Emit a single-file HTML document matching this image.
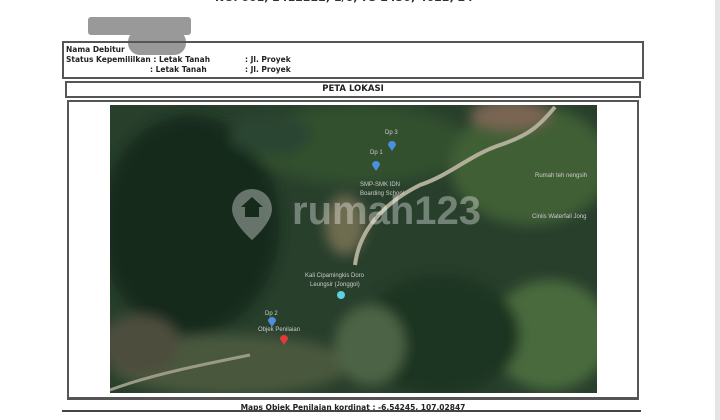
<!DOCTYPE html>
<html><head><style>
*{margin:0;padding:0;box-sizing:border-box}
body{width:720px;height:420px;background:#fff;position:relative;overflow:hidden;font-family:"DejaVu Sans","Liberation Sans",sans-serif;font-weight:bold;color:#222}
.b{position:absolute;border:2px solid #555}
.t{position:absolute;font-size:7.5px;white-space:nowrap}
</style></head><body>
<div style="position:absolute;right:0;top:0;width:5px;height:420px;background:#e6e6e6"></div>
<div class="t" style="left:215px;top:-9px;font-size:11px;color:#333">NO. 001, 2412222, 1/6, 73 2430, 4022, 24</div>
<div style="position:absolute;left:88px;top:17px;width:103px;height:18px;background:#999;border-radius:3px"></div>
<div style="position:absolute;left:128px;top:30px;width:58px;height:25px;background:#999;border-radius:12px"></div>
<div class="b" style="left:62px;top:41px;width:582px;height:38px"></div>
<div class="t" style="left:66px;top:45px">Nama Debitur</div>
<div class="t" style="left:66px;top:55px">Status Kepemililkan : Letak Tanah</div>
<div class="t" style="left:245px;top:55px">: Jl. Proyek</div>
<div class="t" style="left:150px;top:65px">: Letak Tanah</div>
<div class="t" style="left:245px;top:65px">: Jl. Proyek</div>
<div class="b" style="left:65px;top:81px;width:576px;height:17px"></div>
<div class="t" style="left:0;width:706px;text-align:center;top:84px;font-size:8.5px">PETA LOKASI</div>
<div class="b" style="left:67px;top:100px;width:572px;height:300px;border-bottom:3px solid #555"></div>
<svg style="position:absolute;left:110px;top:105px" width="487" height="288">
<defs><filter id="f"><feGaussianBlur stdDeviation="6"/></filter></defs>
<rect width="487" height="288" fill="#283f2c"/>
<g filter="url(#f)">
<ellipse cx="80" cy="120" rx="90" ry="110" fill="#172b1d"/>
<ellipse cx="250" cy="40" rx="110" ry="40" fill="#33502f"/>
<ellipse cx="420" cy="60" rx="80" ry="60" fill="#3f5e36"/>
<ellipse cx="440" cy="230" rx="60" ry="55" fill="#4a6a3c"/>
<ellipse cx="330" cy="230" rx="80" ry="60" fill="#1f3424"/>
<ellipse cx="120" cy="260" rx="120" ry="30" fill="#48593e"/>
<ellipse cx="260" cy="240" rx="35" ry="40" fill="#4e6444"/>
<ellipse cx="235" cy="120" rx="20" ry="30" fill="#6e6c50"/>
<ellipse cx="400" cy="10" rx="40" ry="15" fill="#7a6552"/>
<ellipse cx="30" cy="240" rx="40" ry="30" fill="#4e4e3c"/>
<ellipse cx="160" cy="30" rx="40" ry="20" fill="#2a4430"/>
</g>
<path d="M245 160 C250 120 280 95 310 80 C340 70 360 50 390 40 C420 30 430 20 445 2" stroke="#b0ad98" stroke-width="4" fill="none"/>
<path d="M0 285 C40 270 90 260 140 250" stroke="#9a9a85" stroke-width="3" fill="none"/>
<path d="M278 40 l4 6 4-6 a4 4 0 1 0 -8 0z" fill="#4b8fe0"/>
<path d="M262 60 l4 6 4-6 a4 4 0 1 0 -8 0z" fill="#4b8fe0"/>
<path d="M158 216 l4 6 4-6 a4 4 0 1 0 -8 0z" fill="#4b8fe0"/>
<path d="M170 234 l4 6 4-6 a4 4 0 1 0 -8 0z" fill="#e03b3b"/>
<circle cx="231" cy="190" r="4" fill="#5ad0e0"/>
<g font-family="Liberation Sans" font-size="6" fill="#ccc" font-weight="normal">
<text x="275" y="29">Dp 3</text><text x="260" y="49">Dp 1</text>
<text x="250" y="81">SMP-SMK IDN</text><text x="250" y="90">Boarding School</text>
<text x="425" y="72">Rumah teh nengsih</text><text x="422" y="113">Ciniis Waterfall Jong</text>
<text x="195" y="172">Kali Cipamingkis Doro</text><text x="200" y="181">Leungsir (Jonggol)</text>
<text x="155" y="210">Dp 2</text><text x="148" y="226">Objek Penilaian</text>
</g>
<g fill="#fff" opacity="0.35">
<path fill-rule="evenodd" d="M162 104 a20 20 0 1 0 -40 0 c0 14 20 31 20 31 s20-17 20-31z M142 92 l-11 10 h4 v10 h14 v-10 h4z"/>
<text x="182" y="119" font-family="Liberation Sans" font-weight="bold" font-size="40">rumah123</text>
</g>
</svg>
<div class="t" style="left:0;width:706px;text-align:center;top:403px;font-size:7.5px">Maps Objek Penilaian kordinat : -6.54245, 107.02847</div>
<div style="position:absolute;left:62px;top:410px;width:579px;height:2px;background:#444"></div>
</body></html>
